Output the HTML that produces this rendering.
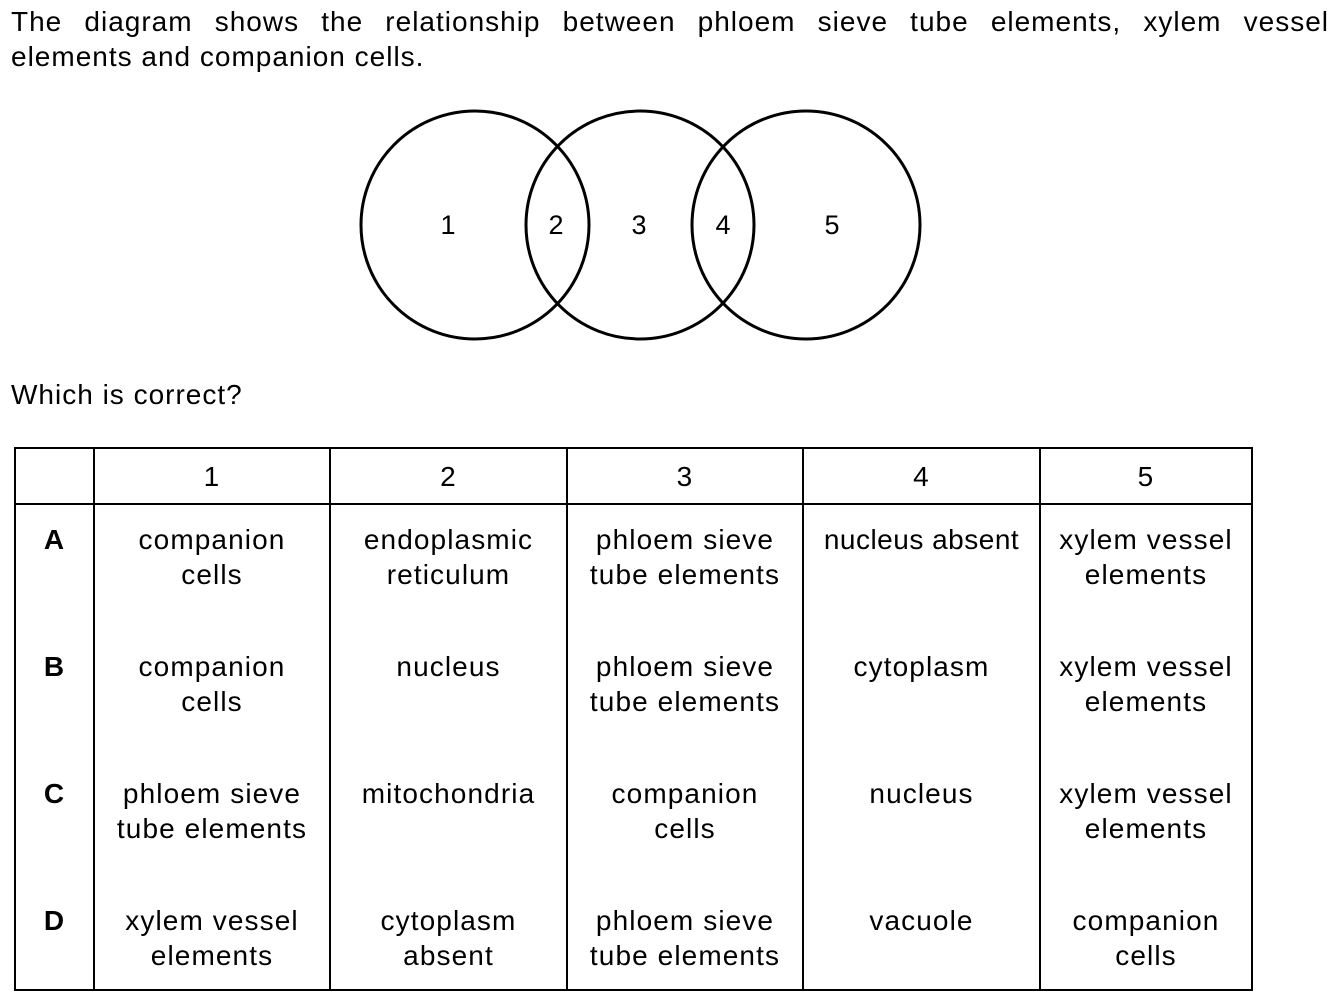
<!DOCTYPE html>
<html><head><style>
body{margin:0;width:1340px;height:1004px;background:#fff;font-family:"Liberation Sans",Arial,sans-serif;color:#000;position:relative;overflow:hidden}
.p{position:absolute;left:11px;width:1318px;font-size:28px;line-height:35px;letter-spacing:1px;white-space:nowrap}
.j{text-align:justify;text-align-last:justify;white-space:normal}
.l{position:absolute;background:#000}
.c{position:absolute;text-align:center;font-size:28px;line-height:35px;letter-spacing:1.1px;white-space:nowrap}
.n{position:absolute;font-size:28px;letter-spacing:1px}
</style></head><body>
<div class="p j" style="top:4px">The diagram shows the relationship between phloem sieve tube elements, xylem vessel</div>
<div class="p" style="top:39px">elements and companion cells.</div>
<svg style="position:absolute;left:0;top:0" width="1340" height="400">
<g fill="none" stroke="#000" stroke-width="3">
<circle cx="475" cy="225" r="114"/><circle cx="640" cy="225" r="114"/><circle cx="806" cy="225" r="114"/></g>
<g font-family="Liberation Sans,Arial,sans-serif" font-size="27" text-anchor="middle">
<text x="448" y="234">1</text><text x="556" y="234">2</text><text x="639" y="234">3</text><text x="723" y="234">4</text><text x="832" y="234">5</text></g>
</svg>
<div class="n" style="left:11px;top:379px">Which is correct?</div>
<div class="l" style="left:14px;top:447px;width:1239px;height:2px"></div>
<div class="l" style="left:14px;top:503px;width:1239px;height:2px"></div>
<div class="l" style="left:14px;top:989px;width:1239px;height:2px"></div>
<div class="l" style="left:14px;top:447px;width:2px;height:544px"></div>
<div class="l" style="left:93px;top:447px;width:2px;height:544px"></div>
<div class="l" style="left:329px;top:447px;width:2px;height:544px"></div>
<div class="l" style="left:566px;top:447px;width:2px;height:544px"></div>
<div class="l" style="left:802px;top:447px;width:2px;height:544px"></div>
<div class="l" style="left:1039px;top:447px;width:2px;height:544px"></div>
<div class="l" style="left:1251px;top:447px;width:2px;height:544px"></div>

<div class="c" style="left:95px;width:234px;top:459px">1</div>
<div class="c" style="left:331px;width:235px;top:459px">2</div>
<div class="c" style="left:568px;width:234px;top:459px">3</div>
<div class="c" style="left:804px;width:235px;top:459px">4</div>
<div class="c" style="left:1041px;width:210px;top:459px">5</div>

<div class="c" style="left:16px;width:77px;top:522px;font-weight:bold">A</div>
<div class="c" style="left:95px;width:234px;top:522px">companion<br>cells</div>
<div class="c" style="left:331px;width:235px;top:522px">endoplasmic<br>reticulum</div>
<div class="c" style="left:568px;width:234px;top:522px">phloem sieve<br>tube elements</div>
<div class="c" style="left:804px;width:235px;top:522px;letter-spacing:0.5px">nucleus absent</div>
<div class="c" style="left:1041px;width:210px;top:522px">xylem vessel<br>elements</div>

<div class="c" style="left:16px;width:77px;top:649px;font-weight:bold">B</div>
<div class="c" style="left:95px;width:234px;top:649px">companion<br>cells</div>
<div class="c" style="left:331px;width:235px;top:649px">nucleus</div>
<div class="c" style="left:568px;width:234px;top:649px">phloem sieve<br>tube elements</div>
<div class="c" style="left:804px;width:235px;top:649px">cytoplasm</div>
<div class="c" style="left:1041px;width:210px;top:649px">xylem vessel<br>elements</div>

<div class="c" style="left:16px;width:77px;top:776px;font-weight:bold">C</div>
<div class="c" style="left:95px;width:234px;top:776px">phloem sieve<br>tube elements</div>
<div class="c" style="left:331px;width:235px;top:776px">mitochondria</div>
<div class="c" style="left:568px;width:234px;top:776px">companion<br>cells</div>
<div class="c" style="left:804px;width:235px;top:776px">nucleus</div>
<div class="c" style="left:1041px;width:210px;top:776px">xylem vessel<br>elements</div>

<div class="c" style="left:16px;width:77px;top:903px;font-weight:bold">D</div>
<div class="c" style="left:95px;width:234px;top:903px">xylem vessel<br>elements</div>
<div class="c" style="left:331px;width:235px;top:903px">cytoplasm<br>absent</div>
<div class="c" style="left:568px;width:234px;top:903px">phloem sieve<br>tube elements</div>
<div class="c" style="left:804px;width:235px;top:903px">vacuole</div>
<div class="c" style="left:1041px;width:210px;top:903px">companion<br>cells</div>
</body></html>
